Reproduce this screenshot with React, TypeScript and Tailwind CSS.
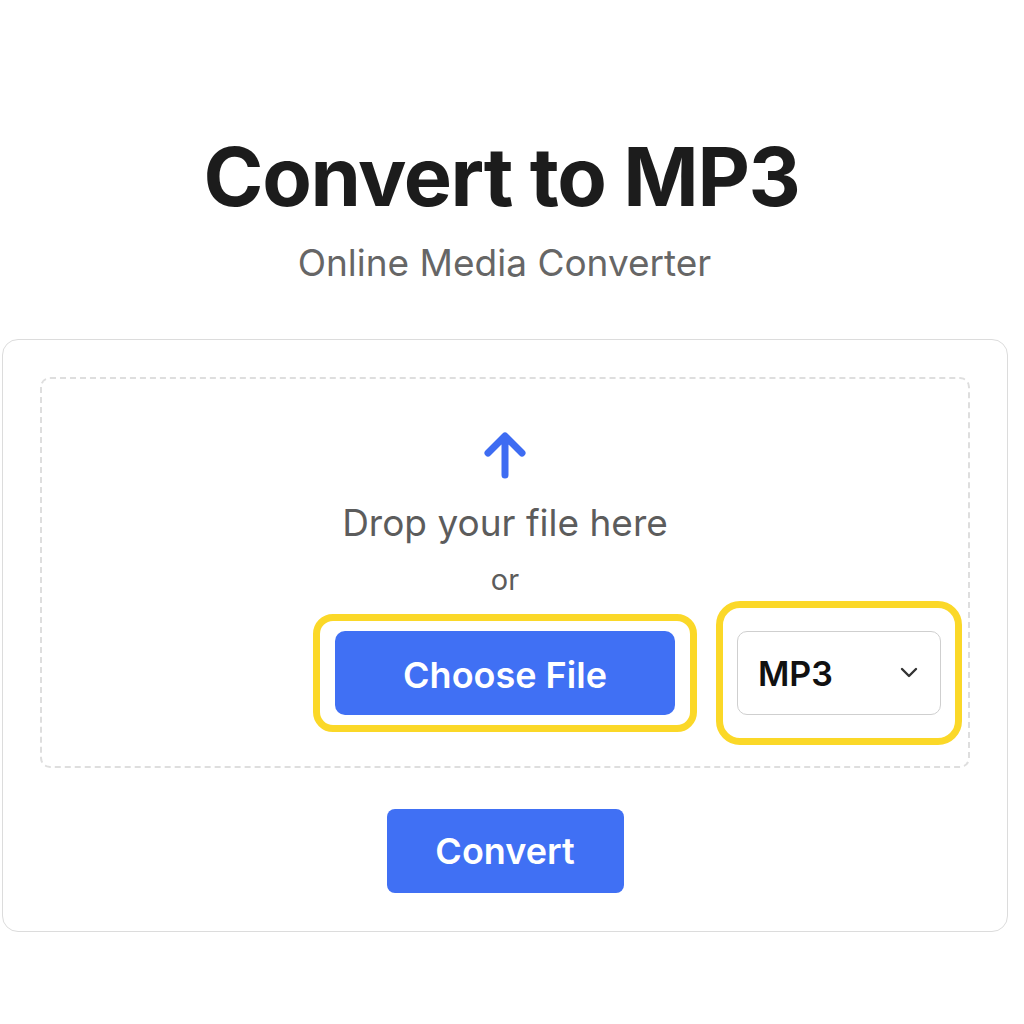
import React from "react";

export default function App() {
  return (
    <div className="w-[1024px] h-[1024px] bg-white overflow-hidden" style={{ fontFamily: "Inter, 'Noto Sans', sans-serif" }}>
      <div className="w-[1009px] flex flex-col">
        <div className="flex flex-col items-center pt-[127px]">
          <h1 className="pr-[6px] text-[81px] font-bold leading-[100px] tracking-[-1.4px] text-[#1c1c1c]">Convert to MP3</h1>
          <p className="mt-[14px] text-[37px] leading-[44px] text-[#666666]">Online Media Converter</p>
        </div>
        <div className="mt-[54px] ml-[2px] w-[1006px] h-[593px] rounded-[16px] border border-[#dcdcdc] px-[37px] pt-[37px] flex flex-col items-center">
          <div className="w-full h-[391px] rounded-[10px] border-2 border-dashed border-[#dedede] flex flex-col items-center">
            <svg className="mt-[51px]" width="50" height="50" viewBox="0 0 50 50" fill="none">
              <path d="M25 45V7M8 23L25 6L42 23" stroke="#3e6cf2" strokeWidth="7" strokeLinecap="round" strokeLinejoin="round" />
            </svg>
            <div className="mt-[21px] text-[37px] leading-[44px] text-[#5c5c5c]">Drop your file here</div>
            <div className="mt-[17px] text-[29px] leading-[36px] text-[#5c5c5c]">or</div>
            <div className="mt-[3px] w-full grid grid-cols-[1fr_auto_1fr] items-center">
              <div />
              <div className="rounded-[20px] border-[7px] border-[#fbd828] px-[15px] py-[10px]">
                <button className="w-[340px] h-[84px] rounded-[10px] bg-[#4070f4] pt-[4px] text-white text-[36px] font-semibold">Choose File</button>
              </div>
              <div className="pl-[19px]">
                <div className="w-[246px] rounded-[24px] border-[7px] border-[#fbd828] px-[14px] py-[23px]">
                  <div className="h-[84px] rounded-[10px] border border-[#cfcfcf] flex items-center justify-between pl-[20px] pr-[22px]">
                    <span className="text-[34px] font-semibold text-[#111111]">MP3</span>
                    <svg width="18" height="12" viewBox="0 0 18 12" fill="none">
                      <path d="M2 2L9 9L16 2" stroke="#333333" strokeWidth="2.4" strokeLinecap="round" strokeLinejoin="round" />
                    </svg>
                  </div>
                </div>
              </div>
            </div>
          </div>
          <button className="mt-[41px] w-[237px] h-[84px] rounded-[8px] bg-[#4070f4] text-white text-[36px] font-semibold">Convert</button>
        </div>
      </div>
    </div>
  );
}
